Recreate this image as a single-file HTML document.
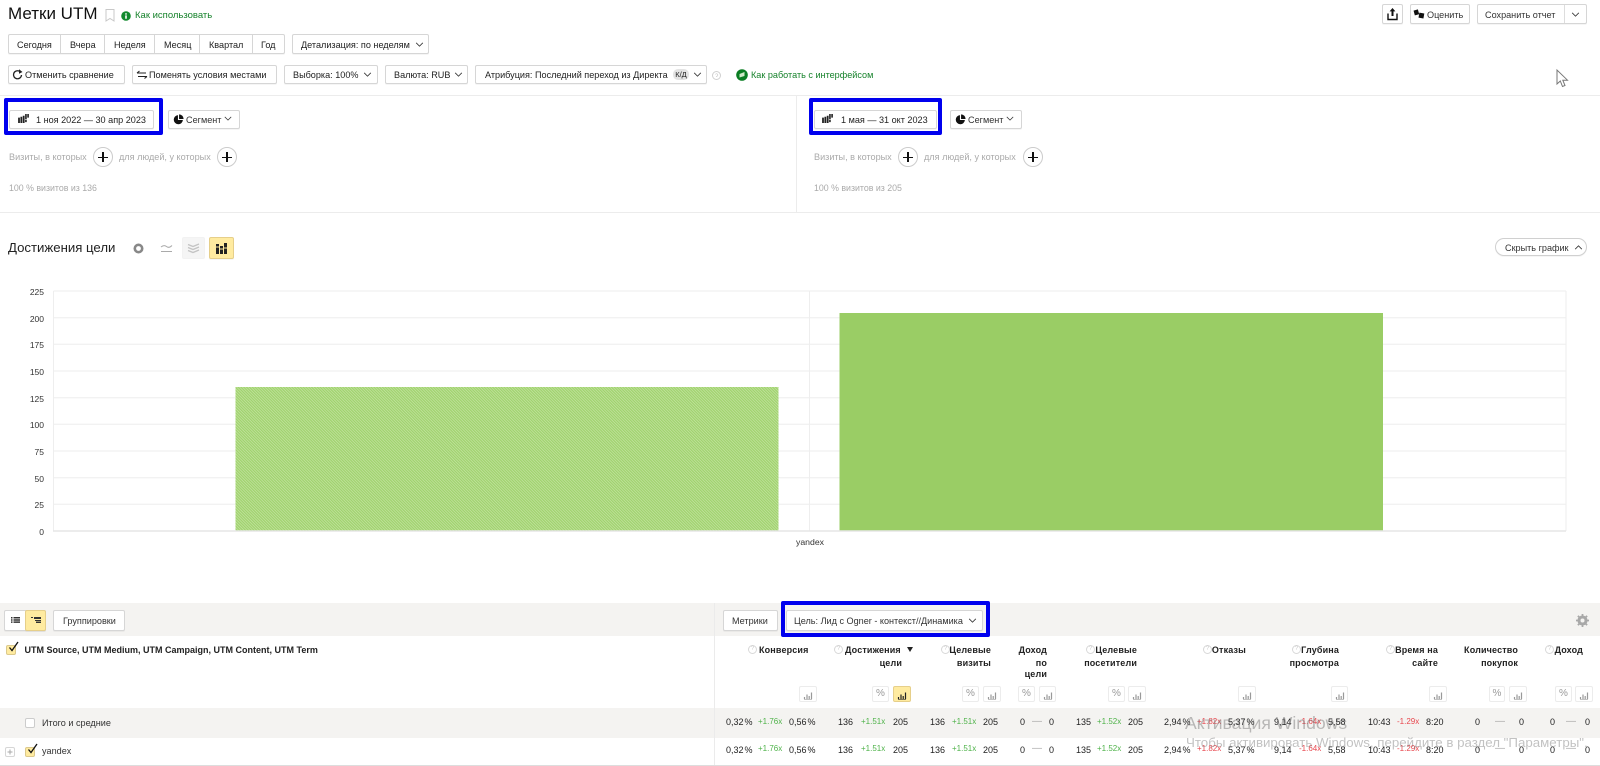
<!DOCTYPE html>
<html lang="ru"><head><meta charset="utf-8"><title>Метки UTM</title>
<style>
html,body{margin:0;padding:0;background:#fff}
#p{position:relative;width:1600px;height:766px;overflow:hidden;background:#fff;font-family:"Liberation Sans","Noto Sans CJK SC",sans-serif;color:#222;font-size:9.1px;filter:blur(.3px)}
#p *{box-sizing:border-box}
.t{position:absolute;white-space:nowrap;line-height:12px;height:12px}
.r{transform:translateX(-100%)}
.b{position:absolute;background:#fff;border:1px solid #d6d6d6;border-radius:2px;box-shadow:0 1px 0 rgba(0,0,0,.04)}
.l{position:absolute;background:#ececec}
.g{color:#aaa}
.h{font-weight:bold;font-size:9px;letter-spacing:.15px;color:#222}
.d{font-size:9px;color:#222}
.up{font-size:8px;color:#4fb34a}
.dn{font-size:8px;color:#e8484f}
.m{font-size:10px;color:#aaa}
.ax{color:#333;font-size:8.5px}
.q{position:absolute;width:9px;height:9px;border:1px solid #d8d8d8;border-radius:50%;background:#fff}
.q:after{content:"?";position:absolute;left:0;top:0;width:7px;height:7px;line-height:7px;font-size:6px;text-align:center;color:#ccc}
.s{position:absolute;top:686px;height:16px;background:#fff;border:1px solid #ececec;border-radius:2px;color:#999;font-size:10px;line-height:14px;text-align:center}
.s svg{position:absolute;left:50%;top:3px;margin-left:-5px}
.y{background:#ffeba0!important;border-color:#e6cf8a!important;color:#222}
.bb{position:absolute;border:4px solid #0000ee;border-radius:2px}
svg{position:absolute;overflow:visible}
.c{position:absolute;width:10px;height:10px;background:#ffeba0;border:1px solid #dcc98c;border-radius:2px}
.pl{position:absolute;width:20px;height:20px;border:1px solid #ccc;border-radius:50%;background:#fff}
.pl:before{content:"";position:absolute;left:4px;top:8.5px;width:10px;height:1.4px;background:#111}
.pl:after{content:"";position:absolute;left:8.3px;top:4px;width:1.4px;height:10px;background:#111}
</style></head><body><div id="p">
<svg width="0" height="0" style="position:absolute"><symbol id="ch" viewBox="0 0 10 10"><path d="M1 9.5h8" stroke="currentColor" stroke-width=".6" fill="none"/><path d="M1.5 9V7M4 9V4.5M6.2 9V6M8.5 9V2.5" stroke="currentColor" stroke-width="1.2" fill="none"/></symbol>
<symbol id="pie" viewBox="0 0 12 12"><path d="M5.4 1.2A5 5 0 1 0 10.8 6.6H5.4z" fill="#111"/><path d="M6.6 0.4V5.4H11.6A5 5 0 0 0 6.6 0.4z" fill="#111"/></symbol>
<symbol id="cal" viewBox="0 0 12 10"><path d="M0 4h2v6H0zM2.6 3h2v7h-2zM5.2 2h2v8h-2zM7.8 0h1.8v6H7.8zM10.2 0H12v4h-1.8zM7.8 6.6h1.8V9H7.8z" fill="#222"/></symbol>
<symbol id="tick" viewBox="0 0 12 12"><path d="M2.5 6.5L5 9.5 11 1" stroke="#111" stroke-width="1.3" fill="none"/></symbol>
<symbol id="dn" viewBox="0 0 10 6"><path d="M1 1l4 4 4-4" stroke="#333" stroke-width="1" fill="none"/></symbol>
<pattern id="hatch" width="2" height="2" patternUnits="userSpaceOnUse" patternTransform="rotate(45)"><rect width="2" height="2" fill="#9fd26c"/><rect width="2" height=".7" fill="#c8e5a8"/></pattern></svg>

<!-- Header -->
<div class="t" style="left:8px;top:3px;font-size:17px;line-height:22px;height:22px;color:#111">Метки UTM</div>
<svg style="left:105px;top:9px" width="10" height="13"><path d="M1 .5h8v11.5L5 9.5 1 12z" fill="#fff" stroke="#c8c8c8"/></svg>
<svg style="left:121px;top:11px" width="10" height="10"><circle cx="5" cy="5" r="4.8" fill="#128a2e"/><path d="M4.2 2.2h1.6v1.4H4.2zM4.2 4.4h1.6v3.4H4.2z" fill="#fff"/></svg>
<div class="t" style="left:135px;top:10px;color:#16822b;font-size:9.5px">Как использовать</div>

<div class="b" style="left:1382px;top:4px;width:21px;height:20px"></div>
<svg style="left:1387px;top:8px" width="11" height="13"><path d="M5.5 0L8.4 3.4H6.5V8h-2V3.4H2.6z" fill="#111"/><path d="M1 5.5V11.5H10V5.5" stroke="#111" stroke-width="1.4" fill="none"/></svg>
<div class="b" style="left:1410px;top:4px;width:60px;height:20px"></div>
<svg style="left:1413px;top:8px" width="12" height="12"><rect x="1" y="2" width="4.5" height="5" fill="#111" transform="rotate(-15 3 4)"/><rect x="6" y="5" width="5" height="5" fill="#111" transform="rotate(10 8 7)"/></svg>
<div class="t" style="left:1427px;top:9px;color:#333">Оценить</div>
<div class="b" style="left:1477px;top:4px;width:110px;height:20px"></div>
<div class="l" style="left:1564px;top:5px;width:1px;height:18px;background:#ddd"></div>
<div class="t" style="left:1485px;top:9px;color:#333">Сохранить отчет</div>
<svg style="left:1571px;top:12px" width="9" height="5"><use href="#dn" width="9" height="5"/></svg>
<svg style="left:1556px;top:69px" width="13" height="20"><path d="M1 1V15L4.300 12L6.500 17.500L9 16.500L6.800 11.200H11.500z" fill="#fff" stroke="#777"/></svg>

<!-- Row 1 -->
<div class="b" style="left:8px;top:34px;width:277px;height:20px"></div>
<div class="l" style="left:60px;top:35px;width:1px;height:18px;background:#d6d6d6"></div>
<div class="l" style="left:104px;top:35px;width:1px;height:18px;background:#d6d6d6"></div>
<div class="l" style="left:154px;top:35px;width:1px;height:18px;background:#d6d6d6"></div>
<div class="l" style="left:199px;top:35px;width:1px;height:18px;background:#d6d6d6"></div>
<div class="l" style="left:252px;top:35px;width:1px;height:18px;background:#d6d6d6"></div>
<div class="t" style="left:17px;top:39px">Сегодня</div>
<div class="t" style="left:70px;top:39px">Вчера</div>
<div class="t" style="left:114px;top:39px">Неделя</div>
<div class="t" style="left:164px;top:39px">Месяц</div>
<div class="t" style="left:209px;top:39px">Квартал</div>
<div class="t" style="left:261px;top:39px">Год</div>
<div class="b" style="left:292px;top:34px;width:137px;height:20px"></div>
<div class="t" style="left:301px;top:39px">Детализация: по неделям</div>
<svg style="left:415px;top:42px" width="9" height="5"><use href="#dn" width="9" height="5"/></svg>

<!-- Row 2 -->
<div class="b" style="left:8px;top:65px;width:117px;height:19px"></div>
<svg style="left:12px;top:69px" width="11" height="11"><path d="M9.500 6A4 4 0 1 1 7.500 2.300" stroke="#222" stroke-width="1.300" fill="none"/><path d="M7 .3L10.500 3 7 4.800z" fill="#222"/></svg>
<div class="t" style="left:25px;top:69px">Отменить сравнение</div>
<div class="b" style="left:132px;top:65px;width:145px;height:19px"></div>
<svg style="left:137px;top:71px" width="10" height="8"><path d="M0 2h9M2.500 0L0 2M1 5.500h9M7.500 7.500L10 5.500" stroke="#222" stroke-width="1.100" fill="none"/></svg>
<div class="t" style="left:149px;top:69px">Поменять условия местами</div>
<div class="b" style="left:284px;top:65px;width:94px;height:19px"></div>
<div class="t" style="left:293px;top:69px">Выборка: 100%</div>
<svg style="left:363px;top:72px" width="9" height="5"><use href="#dn" width="9" height="5"/></svg>
<div class="b" style="left:385px;top:65px;width:83px;height:19px"></div>
<div class="t" style="left:394px;top:69px">Валюта: RUB</div>
<svg style="left:454px;top:72px" width="9" height="5"><use href="#dn" width="9" height="5"/></svg>
<div class="b" style="left:475px;top:65px;width:232px;height:19px"></div>
<div class="t" style="left:485px;top:69px">Атрибуция: Последний переход из Директа</div>
<div class="t" style="left:673px;top:69px;width:16px;height:11px;line-height:11px;background:#e3e3e3;border-radius:5px;font-size:7.5px;text-align:center">К/Д</div>
<svg style="left:693px;top:72px" width="9" height="5"><use href="#dn" width="9" height="5"/></svg>
<svg style="left:712px;top:71px" width="9" height="9"><circle cx="4.500" cy="4.500" r="4" fill="none" stroke="#d0d0d0"/><path d="M3.500 3.500Q4.500 2 5.500 3.300T4.500 5.500V6" stroke="#ccc" stroke-width=".7" fill="none"/></svg>
<svg style="left:736px;top:69px" width="12" height="12"><circle cx="6" cy="6" r="5.800" fill="#0a7d23"/><path d="M3.500 8.500V5L8.500 3V7z" fill="#cfe9c8"/></svg>
<div class="t" style="left:751px;top:69px;color:#16822b">Как работать с интерфейсом</div>

<div class="l" style="left:0;top:95px;width:1600px;height:1px"></div>
<div class="l" style="left:0;top:212px;width:1600px;height:1px"></div>
<div class="l" style="left:796px;top:96px;width:1px;height:116px"></div>

<!-- Left segment -->
<div class="bb" style="left:4px;top:98px;width:159px;height:37px"></div>
<div class="b" style="left:9px;top:110px;width:145px;height:19px"></div>
<svg style="left:18px;top:114px" width="11" height="9"><use href="#cal" width="11" height="9"/></svg>
<div class="t" style="left:36px;top:114px">1 ноя 2022 — 30 апр 2023</div>
<div class="b" style="left:168px;top:110px;width:72px;height:19px"></div>
<svg style="left:173px;top:114px" width="11" height="11"><use href="#pie" width="11" height="11"/></svg>
<div class="t" style="left:186px;top:114px;color:#333">Сегмент</div>
<svg style="left:224px;top:116px" width="8" height="5"><use href="#dn" width="8" height="5"/></svg>
<div class="t g" style="left:9px;top:151px">Визиты, в которых</div>
<div class="pl" style="left:93px;top:147px"></div>
<div class="t g" style="left:119px;top:151px">для людей, у которых</div>
<div class="pl" style="left:217px;top:147px"></div>
<div class="t g" style="left:9px;top:182px;font-size:8.8px">100 % визитов из 136</div>

<!-- Right segment -->
<div class="bb" style="left:809px;top:98px;width:133px;height:37px"></div>
<div class="b" style="left:814px;top:110px;width:123px;height:19px"></div>
<svg style="left:822px;top:114px" width="11" height="9"><use href="#cal" width="11" height="9"/></svg>
<div class="t" style="left:841px;top:114px">1 мая — 31 окт 2023</div>
<div class="b" style="left:950px;top:110px;width:72px;height:19px"></div>
<svg style="left:955px;top:114px" width="11" height="11"><use href="#pie" width="11" height="11"/></svg>
<div class="t" style="left:968px;top:114px;color:#333">Сегмент</div>
<svg style="left:1006px;top:116px" width="8" height="5"><use href="#dn" width="8" height="5"/></svg>
<div class="t g" style="left:814px;top:151px">Визиты, в которых</div>
<div class="pl" style="left:898px;top:147px"></div>
<div class="t g" style="left:924px;top:151px">для людей, у которых</div>
<div class="pl" style="left:1023px;top:147px"></div>
<div class="t g" style="left:814px;top:182px;font-size:8.8px">100 % визитов из 205</div>

<!-- Chart header -->
<div class="t" style="left:8px;top:240px;font-size:13.2px;line-height:16px;height:16px;color:#222">Достижения цели</div>
<svg style="left:133px;top:243px" width="11" height="11"><circle cx="5.500" cy="5.500" r="3.700" fill="none" stroke="#888" stroke-width="2.600"/></svg>
<svg style="left:160px;top:243px" width="13" height="10"><path d="M1 4Q4 1.500 6.500 3.500T12 2.500M1 8.500H12" stroke="#aaa" stroke-width="1" fill="none"/></svg>
<div class="b" style="left:182px;top:237px;width:23px;height:22px;background:#f5f5f5;border-color:#f2f2f2;box-shadow:none"></div>
<svg style="left:188px;top:243px" width="11" height="11"><path d="M0 1.500L5 3.500 11 1M0 4.500L5 6.500 11 4M0 7.500L5 9.500 11 7" stroke="#c4c4c4" stroke-width="1.300" fill="none"/></svg>
<div class="b y" style="left:209px;top:237px;width:25px;height:22px"></div>
<svg style="left:216px;top:243px" width="11" height="11"><path d="M0 1h3v10H0zM4 3h3v8H4zM8 0h3v11H8z" fill="#222"/><path d="M0 4h3M4 6h3M8 5h3" stroke="#ffeba0"/></svg>
<div class="b" style="left:1495px;top:238px;width:92px;height:18px;border-radius:9px;border-color:#d0d0d0"></div>
<div class="t" style="left:1505px;top:242px;color:#333">Скрыть график</div>
<svg style="left:1574px;top:245px" width="9" height="5"><use href="#dn" width="9" height="5" transform="rotate(180 4.500 2.500)"/></svg>

<!-- Chart -->
<svg style="left:0;top:280px" width="1600" height="270">
<g fill="none" stroke="#eeeeee" stroke-width="1">
<path d="M53.500 11H1566M53.500 37.700H1566M53.500 64.300H1566M53.500 91H1566M53.500 117.700H1566M53.500 144.300H1566M53.500 171H1566M53.500 197.700H1566M53.500 224.300H1566"/>
<path d="M53.500 11V251M809.500 11V251M1566 11V251"/>
</g>
<rect x="235.500" y="107" width="543" height="144" fill="url(#hatch)"/>
<rect x="839.500" y="33" width="543.500" height="218" fill="#9acd65"/>
<path d="M53 251H1566" stroke="#e6e6e6" stroke-width="1.500"/>
</svg>
<div class="t r ax" style="left:44px;top:286px">225</div>
<div class="t r ax" style="left:44px;top:313px">200</div>
<div class="t r ax" style="left:44px;top:339px">175</div>
<div class="t r ax" style="left:44px;top:366px">150</div>
<div class="t r ax" style="left:44px;top:393px">125</div>
<div class="t r ax" style="left:44px;top:419px">100</div>
<div class="t r ax" style="left:44px;top:446px">75</div>
<div class="t r ax" style="left:44px;top:473px">50</div>
<div class="t r ax" style="left:44px;top:499px">25</div>
<div class="t r ax" style="left:44px;top:526px">0</div>
<div class="t" style="left:796px;top:536px;color:#333;font-size:8.7px">yandex</div>

<!-- Table toolbar -->
<div style="position:absolute;left:0;top:603px;width:1600px;height:33px;background:#f4f3f1"></div>
<div style="position:absolute;left:0;top:708px;width:1600px;height:30px;background:#f4f3f1"></div>
<div class="l" style="left:714px;top:603px;width:1px;height:163px;background:#ebebeb"></div>
<div class="l" style="left:0;top:765px;width:1600px;height:1px;background:#ddd"></div>
<div class="b" style="left:4px;top:610px;width:42px;height:21px"></div>
<div class="b y" style="left:25px;top:610px;width:21px;height:21px"></div>
<svg style="left:11px;top:617px" width="9" height="6"><path d="M0 0h1.500v1.500H0zM0 2.200h1.500v1.500H0zM0 4.400h1.500v1.500H0zM2.500 0H9v1.500H2.500zM2.500 2.200H9v1.500H2.500zM2.500 4.400H9v1.500H2.500z" fill="#333"/></svg>
<svg style="left:31px;top:617px" width="10" height="6"><path d="M0 0h2v1H0zM3 0h7v2H3zM4 3h6v1H4zM5 4.500h5v1.500H5z" fill="#333"/></svg>
<div class="b" style="left:53px;top:610px;width:72px;height:21px"></div>
<div class="t" style="left:63px;top:615px;color:#333">Группировки</div>
<div class="b" style="left:723px;top:610px;width:55px;height:21px"></div>
<div class="t" style="left:732px;top:615px;color:#333">Метрики</div>
<div class="bb" style="left:781px;top:601px;width:209px;height:36px"></div>
<div class="b" style="left:786px;top:610px;width:197px;height:21px"></div>
<div class="t" style="left:794px;top:615px;color:#333">Цель: Лид с Ogner - контекст//Динамика</div>
<svg style="left:968px;top:618px" width="9" height="5"><use href="#dn" width="9" height="5"/></svg>
<svg style="left:1576px;top:614px" width="13" height="13"><circle cx="6.500" cy="6.500" r="3.700" fill="none" stroke="#a8a8a8" stroke-width="2.700"/><path d="M6.500 0V13M0 6.500H13M1.900 1.900L11.100 11.100M11.100 1.900L1.900 11.100" stroke="#a8a8a8" stroke-width="1.800"/><circle cx="6.500" cy="6.500" r="2" fill="#f4f3f1"/></svg>

<!-- Table header -->
<div class="c" style="left:6px;top:645px"></div>
<svg style="left:7px;top:641px" width="12" height="12"><use href="#tick" width="12" height="12"/></svg>
<div class="t h" style="left:24.500px;top:644px;font-size:9px;letter-spacing:0">UTM Source, UTM Medium, UTM Campaign, UTM Content, UTM Term</div>

<div class="q" style="left:748px;top:645px"></div><div class="t h" style="left:759px;top:644px">Конверсия</div>
<div class="q" style="left:834px;top:645px"></div><div class="t h" style="left:845px;top:644px">Достижения</div>
<svg style="left:907px;top:647px" width="6" height="5"><path d="M0 0h6L3 5z" fill="#222"/></svg>
<div class="t h r" style="left:902px;top:657px">цели</div>
<div class="q" style="left:941px;top:645px"></div><div class="t h r" style="left:991px;top:644px">Целевые</div>
<div class="t h r" style="left:991px;top:657px">визиты</div>
<div class="t h r" style="left:1047px;top:644px">Доход</div>
<div class="t h r" style="left:1047px;top:657px">по</div>
<div class="t h r" style="left:1047px;top:668px">цели</div>
<div class="q" style="left:1086px;top:645px"></div><div class="t h r" style="left:1137px;top:644px">Целевые</div>
<div class="t h r" style="left:1137px;top:657px">посетители</div>
<div class="q" style="left:1203px;top:645px"></div><div class="t h r" style="left:1246px;top:644px">Отказы</div>
<div class="q" style="left:1292px;top:645px"></div><div class="t h r" style="left:1339px;top:644px">Глубина</div>
<div class="t h r" style="left:1339px;top:657px">просмотра</div>
<div class="q" style="left:1386px;top:645px"></div><div class="t h r" style="left:1438px;top:644px">Время на</div>
<div class="t h r" style="left:1438px;top:657px">сайте</div>
<div class="t h r" style="left:1518px;top:644px">Количество</div>
<div class="t h r" style="left:1518px;top:657px">покупок</div>
<div class="q" style="left:1545px;top:645px"></div><div class="t h r" style="left:1583px;top:644px">Доход</div>

<!-- small buttons -->
<div class="s" style="left:799px;width:18px"><svg width="10" height="10"><use href="#ch" width="10" height="10"/></svg></div>
<div class="s" style="left:872px;width:17px">%</div>
<div class="s y" style="left:893px;width:18px"><svg width="10" height="10"><use href="#ch" width="10" height="10"/></svg></div>
<div class="s" style="left:962px;width:17px">%</div>
<div class="s" style="left:983px;width:18px"><svg width="10" height="10"><use href="#ch" width="10" height="10"/></svg></div>
<div class="s" style="left:1018px;width:17px">%</div>
<div class="s" style="left:1039px;width:17px"><svg width="10" height="10"><use href="#ch" width="10" height="10"/></svg></div>
<div class="s" style="left:1108px;width:17px">%</div>
<div class="s" style="left:1128px;width:18px"><svg width="10" height="10"><use href="#ch" width="10" height="10"/></svg></div>
<div class="s" style="left:1238px;width:18px"><svg width="10" height="10"><use href="#ch" width="10" height="10"/></svg></div>
<div class="s" style="left:1331px;width:17px"><svg width="10" height="10"><use href="#ch" width="10" height="10"/></svg></div>
<div class="s" style="left:1429px;width:18px"><svg width="10" height="10"><use href="#ch" width="10" height="10"/></svg></div>
<div class="s" style="left:1489px;width:16px">%</div>
<div class="s" style="left:1509px;width:18px"><svg width="10" height="10"><use href="#ch" width="10" height="10"/></svg></div>
<div class="s" style="left:1555px;width:17px">%</div>
<div class="s" style="left:1575px;width:18px"><svg width="10" height="10"><use href="#ch" width="10" height="10"/></svg></div>

<!-- Row total -->
<div class="c" style="left:25px;top:718px;background:#fff;border-color:#ccc"></div>
<div class="t" style="left:42px;top:717px;font-size:9.1px;color:#333">Итого и средние</div>
<div class="t d" style="left:726px;top:716px;word-spacing:-1.500px">0,32 %</div><div class="t up" style="left:758px;top:716px">+1.76x</div><div class="t d" style="left:789px;top:716px;word-spacing:-1.500px">0,56 %</div>
<div class="t d" style="left:838px;top:716px">136</div><div class="t up" style="left:861px;top:716px">+1.51x</div><div class="t d" style="left:893px;top:716px">205</div>
<div class="t d" style="left:930px;top:716px">136</div><div class="t up" style="left:952px;top:716px">+1.51x</div><div class="t d" style="left:983px;top:716px">205</div>
<div class="t d" style="left:1020px;top:716px">0</div><div class="t m" style="left:1032px;top:716px">—</div><div class="t d" style="left:1049px;top:716px">0</div>
<div class="t d" style="left:1076px;top:716px">135</div><div class="t up" style="left:1097px;top:716px">+1.52x</div><div class="t d" style="left:1128px;top:716px">205</div>
<div class="t d" style="left:1164px;top:716px;word-spacing:-1.500px">2,94 %</div><div class="t dn" style="left:1197px;top:716px">+1.82x</div><div class="t d" style="left:1228px;top:716px;word-spacing:-1.500px">5,37 %</div>
<div class="t d" style="left:1274px;top:716px">9,14</div><div class="t dn" style="left:1299px;top:716px">-1.64x</div><div class="t d" style="left:1328px;top:716px">5,58</div>
<div class="t d" style="left:1368px;top:716px">10:43</div><div class="t dn" style="left:1397px;top:716px">-1.29x</div><div class="t d" style="left:1426px;top:716px">8:20</div>
<div class="t d" style="left:1475px;top:716px">0</div><div class="t m" style="left:1495px;top:716px">—</div><div class="t d" style="left:1519px;top:716px">0</div>
<div class="t d" style="left:1550px;top:716px">0</div><div class="t m" style="left:1566px;top:716px">—</div><div class="t d" style="left:1585px;top:716px">0</div>

<!-- Row yandex -->
<div class="b" style="left:5px;top:747px;width:10px;height:10px;box-shadow:none"></div>
<svg style="left:7px;top:749px" width="6" height="6"><path d="M3 .5v5M.5 3h5" stroke="#aaa"/></svg>
<div class="c" style="left:25px;top:747px"></div>
<svg style="left:26px;top:743px" width="12" height="12"><use href="#tick" width="12" height="12"/></svg>
<div class="t" style="left:42px;top:745px;font-size:9.1px;color:#333">yandex</div>
<div class="t d" style="left:726px;top:744px;word-spacing:-1.500px">0,32 %</div><div class="t up" style="left:758px;top:743px">+1.76x</div><div class="t d" style="left:789px;top:744px;word-spacing:-1.500px">0,56 %</div>
<div class="t d" style="left:838px;top:744px">136</div><div class="t up" style="left:861px;top:743px">+1.51x</div><div class="t d" style="left:893px;top:744px">205</div>
<div class="t d" style="left:930px;top:744px">136</div><div class="t up" style="left:952px;top:743px">+1.51x</div><div class="t d" style="left:983px;top:744px">205</div>
<div class="t d" style="left:1020px;top:744px">0</div><div class="t m" style="left:1032px;top:743px">—</div><div class="t d" style="left:1049px;top:744px">0</div>
<div class="t d" style="left:1076px;top:744px">135</div><div class="t up" style="left:1097px;top:743px">+1.52x</div><div class="t d" style="left:1128px;top:744px">205</div>
<div class="t d" style="left:1164px;top:744px;word-spacing:-1.500px">2,94 %</div><div class="t dn" style="left:1197px;top:743px">+1.82x</div><div class="t d" style="left:1228px;top:744px;word-spacing:-1.500px">5,37 %</div>
<div class="t d" style="left:1274px;top:744px">9,14</div><div class="t dn" style="left:1299px;top:743px">-1.64x</div><div class="t d" style="left:1328px;top:744px">5,58</div>
<div class="t d" style="left:1368px;top:744px">10:43</div><div class="t dn" style="left:1397px;top:743px">-1.29x</div><div class="t d" style="left:1426px;top:744px">8:20</div>
<div class="t d" style="left:1475px;top:744px">0</div><div class="t m" style="left:1495px;top:743px">—</div><div class="t d" style="left:1519px;top:744px">0</div>
<div class="t d" style="left:1550px;top:744px">0</div><div class="t m" style="left:1566px;top:743px">—</div><div class="t d" style="left:1585px;top:744px">0</div>

<!-- Watermark -->
<div class="t" style="left:1185px;top:711px;font-size:17.600px;line-height:24px;height:24px;color:rgba(110,110,110,.45)">Активация Windows</div>
<div class="t" style="left:1186px;top:734px;font-size:13.300px;line-height:18px;height:18px;color:rgba(110,110,110,.42)">Чтобы активировать Windows, перейдите в раздел "Параметры".</div>
</div></body></html>
